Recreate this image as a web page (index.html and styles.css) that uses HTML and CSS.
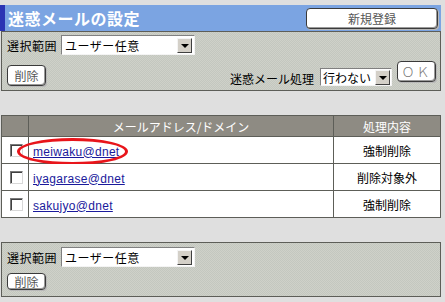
FILE: index.html
```html
<!DOCTYPE html>
<html lang="ja">
<head>
    <meta charset="UTF-8">
    <title>迷惑メールの設定</title>
    <link rel="stylesheet" href="styles.css">
</head>
<body>
<div class="page">

    <!-- Title bar -->
    <div class="titlebar">
        <h1>迷惑メールの設定</h1>
        <button class="btn btn-new">新規登録</button>
    </div>

    <!-- Top controls -->
    <div class="panel">
        <div class="row">
            <span class="label">選択範囲</span>
            <div class="select select-wide"><span class="value">ユーザー任意</span><span class="arrow"></span></div>
        </div>
        <div class="row row-actions">
            <button class="btn btn-del">削除</button>
            <div class="process">
                <span class="label process-label">迷惑メール処理</span>
                <div class="select select-small"><span class="value">行わない</span><span class="arrow"></span></div>
                <button class="btn btn-ok">ＯＫ</button>
            </div>
        </div>
    </div>

    <!-- Address list -->
    <table class="list">
        <thead>
            <tr>
                <th class="col-check"></th>
                <th class="col-addr">メールアドレス/ドメイン</th>
                <th class="col-action">処理内容</th>
            </tr>
        </thead>
        <tbody>
            <tr>
                <td class="col-check"><input type="checkbox"></td>
                <td class="col-addr"><a href="#">meiwaku@dnet</a><span class="circle"></span></td>
                <td class="col-action">強制削除</td>
            </tr>
            <tr>
                <td class="col-check"><input type="checkbox"></td>
                <td class="col-addr"><a href="#">iyagarase@dnet</a></td>
                <td class="col-action">削除対象外</td>
            </tr>
            <tr>
                <td class="col-check"><input type="checkbox"></td>
                <td class="col-addr"><a href="#">sakujyo@dnet</a></td>
                <td class="col-action">強制削除</td>
            </tr>
        </tbody>
    </table>

    <!-- Bottom controls -->
    <div class="panel panel-bottom">
        <div class="row">
            <span class="label">選択範囲</span>
            <div class="select select-wide"><span class="value">ユーザー任意</span><span class="arrow"></span></div>
        </div>
        <div class="row">
            <button class="btn btn-del btn-small">削除</button>
        </div>
    </div>

</div>
</body>
</html>
```

FILE: styles.css
```css
body {
    margin: 0;
    background-color: #dfdfdf;
    font-family: "Noto Sans CJK JP", sans-serif;
    font-size: 12px;
    color: #000;
}
.page {
    width: 441px;
    padding-top: 5px;
}
.titlebar {
    height: 26px;
    background-color: #7ba4e2;
    border-left: 5px solid #2b34b4;
    display: flex;
    align-items: center;
    justify-content: space-between;
    padding: 0 3px 0 3px;
}
.titlebar h1 {
    margin: 0;
    font-size: 16px;
    font-weight: bold;
    color: #fff;
    letter-spacing: 0.5px;
}
.btn {
    font-family: "Noto Sans CJK JP", sans-serif;
    font-size: 12px;
    color: #555;
    background-color: #fff;
    border: 1px solid #3a3a3a;
    border-radius: 4px;
    box-shadow: inset -1px -1px 0 #9a9a9a, 1px 1px 0 #b8b8b8;
    padding: 0;
    line-height: 1;
    cursor: pointer;
}
.btn-new {
    width: 132px;
    height: 21px;
    margin-top: 1px;
}
.panel {
    margin-left: 1px;
    border: 1px solid #5d5e58;
    background: repeating-conic-gradient(#c3c7bf 0 25%, #cfd1c9 0 50%) 0 0 / 2px 2px;
    padding: 3px 4px 3px 4px;
}
.row {
    display: flex;
    align-items: center;
}
.label {
    margin-left: 1px;
    margin-right: 4px;
    letter-spacing: 0.5px;
}
.select {
    background-color: #fff;
    border: 1px solid;
    border-color: #808080 #f4f4f4 #f4f4f4 #808080;
    display: flex;
    align-items: center;
    justify-content: space-between;
    box-sizing: border-box;
    padding: 0 2px 0 3px;
    white-space: nowrap;
}
.select .value {
    font-size: 12px;
    letter-spacing: 0.5px;
}
.select .arrow {
    flex: none;
    width: 15px;
    height: 15px;
    box-sizing: border-box;
    background-color: #d4d0c8;
    border: 1px solid;
    border-color: #f4f4f4 #404040 #404040 #f4f4f4;
    position: relative;
}
.select .arrow::after {
    content: "";
    position: absolute;
    left: 3px;
    top: 5px;
    border-left: 4px solid transparent;
    border-right: 4px solid transparent;
    border-top: 4px solid #000;
}
.select-wide {
    width: 134px;
    height: 20px;
}
.select-small {
    width: 72px;
    height: 18px;
    margin-top: 7px;
    padding-left: 2px;
    padding-right: 1px;
}
.select-small .value {
    letter-spacing: 0;
}
.row-actions {
    margin-top: 6px;
    align-items: flex-start;
    justify-content: space-between;
}
.btn-del {
    width: 39px;
    height: 21px;
    margin-top: 4px;
    margin-left: 1px;
}
.process {
    display: flex;
    align-items: flex-start;
}
.process-label {
    margin-top: 9px;
    margin-right: 6px;
    letter-spacing: 0;
}
.btn-ok {
    width: 39px;
    height: 21px;
    margin-left: 5px;
    margin-right: 0;
    font-size: 13px;
    color: #777;
    letter-spacing: 2px;
    font-weight: 300;
}
.list {
    margin-top: 24px;
    margin-left: 1px;
    width: 440px;
    border-collapse: collapse;
    border: 1px solid #5d5e58;
    table-layout: fixed;
}
.list th {
    height: 20px;
    padding: 0;
    font-weight: normal;
    color: #fff;
    background: repeating-conic-gradient(#87847b 0 25%, #94918a 0 50%) 0 0 / 2px 2px;
    border: 1px solid #5d5e58;
    text-align: center;
}
.list td {
    height: 26px;
    padding: 0;
    background-color: #fff;
    border: 1px solid #5d5e58;
}
.list .col-check {
    width: 26px;
    text-align: center;
}
.list .col-addr {
    width: 304px;
}
.list td.col-addr {
    padding-left: 4px;
    position: relative;
}
.list .col-action {
    text-align: center;
}
.list a {
    font-family: "Liberation Sans", sans-serif;
    color: #1a1a9c;
    letter-spacing: 0.3px;
}
.list input[type="checkbox"] {
    appearance: none;
    display: block;
    width: 13px;
    height: 13px;
    margin: 0 0 0 8px;
    box-sizing: border-box;
    background-color: #fff;
    border: 1px solid;
    border-color: #7a7a7a #d8d8d8 #d8d8d8 #7a7a7a;
    box-shadow: inset 1px 1px 0 #404040;
}
.circle {
    position: absolute;
    left: -12px;
    top: 1px;
    width: 111px;
    height: 27px;
    box-sizing: border-box;
    border: 3px solid #e8151b;
    border-radius: 50%;
    pointer-events: none;
}
.panel-bottom {
    margin-top: 24px;
    padding: 4px 4px 6px 4px;
}
.panel-bottom .row + .row {
    margin-top: 6px;
}
.btn-small {
    height: 17px;
    margin-top: 0;
}
```
